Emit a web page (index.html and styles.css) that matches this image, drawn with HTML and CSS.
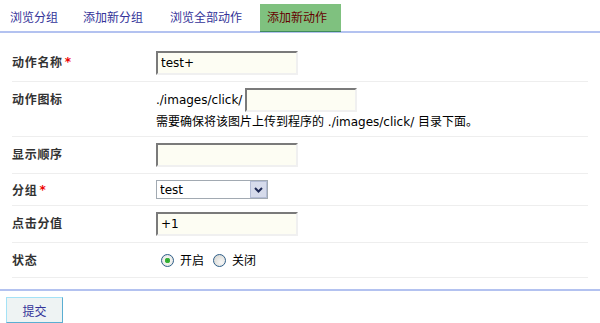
FILE: index.html
```html
<!DOCTYPE html>
<html lang="zh-CN">
<head>
    <meta charset="UTF-8">
    <title>添加新动作</title>
    <link rel="stylesheet" href="styles.css">
</head>
<body>
    <div class="tabs">
        <a class="tab" href="#">浏览分组</a>
        <a class="tab" href="#">添加新分组</a>
        <a class="tab" href="#">浏览全部动作</a>
        <a class="tab active" href="#">添加新动作</a>
    </div>

    <form class="action-form">
        <table class="form-table">
            <tr>
                <th><div class="cell-label">动作名称<span class="req">*</span></div></th>
                <td><input type="text" class="text-input" value="test+"></td>
            </tr>
            <tr>
                <th><div class="cell-label">动作图标</div></th>
                <td>
                    <div class="icon-line">
                        <span class="prefix">./images/click/</span><input type="text" class="text-input short">
                    </div>
                    <div class="hint">需要确保将该图片上传到程序的 ./images/click/ 目录下面。</div>
                </td>
            </tr>
            <tr>
                <th><div class="cell-label">显示顺序</div></th>
                <td><input type="text" class="text-input"></td>
            </tr>
            <tr>
                <th><div class="cell-label short-label">分组<span class="req">*</span></div></th>
                <td>
                    <div class="select-wrap">
                        <select class="group-select">
                            <option>test</option>
                        </select>
                        <span class="select-arrow">
                            <svg width="9" height="6" viewBox="0 0 9 6"><path d="M1 1 L4.5 4.5 L8 1" fill="none" stroke="#1f2a55" stroke-width="2"/></svg>
                        </span>
                    </div>
                </td>
            </tr>
            <tr>
                <th><div class="cell-label">点击分值</div></th>
                <td><input type="text" class="text-input" value="+1"></td>
            </tr>
            <tr>
                <th><div class="cell-label">状态</div></th>
                <td>
                    <div class="radio-group">
                        <label class="radio"><input type="radio" name="status" checked>开启</label>
                        <label class="radio"><input type="radio" name="status">关闭</label>
                    </div>
                </td>
            </tr>
        </table>

        <div class="form-footer">
            <button type="button" class="submit-btn">提交</button>
        </div>
    </form>
</body>
</html>
```

FILE: styles.css
```css
body {
    margin: 0;
    font-family: "DejaVu Sans", "Noto Sans CJK SC", sans-serif;
    font-size: 12px;
    color: #000;
    background: #fff;
}
.tabs {
    display: flex;
    height: 27px;
    padding: 4px 0 0 3px;
    border-bottom: 2px solid #b3c2f0;
}
.tab {
    display: block;
    height: 27px;
    line-height: 26px;
    padding: 0 14px 0 7px;
    margin-right: 4px;
    font-family: "Noto Sans CJK SC", sans-serif;
    color: #333399;
    text-decoration: none;
}
.tab:nth-child(2) {
    margin-right: 6px;
}
.tab.active {
    background: #7fc17f;
    border-bottom: 1px solid #3f8a5c;
    color: #660000;
}
.action-form {
    margin: 0;
}
.form-table {
    margin: 12px 12px 0 12px;
    width: 576px;
    border-collapse: collapse;
}
.form-table th,
.form-table td {
    padding: 6px 0;
    border-bottom: 1px solid #eeeeee;
    vertical-align: top;
    line-height: 16px;
}
.form-table th {
    width: 144px;
    text-align: left;
}
.cell-label {
    display: flex;
    align-items: center;
    height: 22px;
    font-family: "Noto Sans CJK SC", sans-serif;
    font-weight: bold;
    letter-spacing: 0.7px;
    color: #333;
}
.cell-label.short-label {
    height: 19px;
}
.req {
    color: #e00;
    font-family: "DejaVu Sans", sans-serif;
    margin-left: 2px;
}
.text-input {
    box-sizing: border-box;
    display: block;
    width: 142px;
    height: 24px;
    margin: 0;
    padding: 0 3px;
    font-family: "DejaVu Sans", sans-serif;
    font-size: 12px;
    color: #000;
    background: #fdfdf3;
    border: 2px solid;
    border-color: #7a7a7a #f0f0f0 #f0f0f0 #7a7a7a;
    outline: none;
}
.icon-line {
    display: flex;
    align-items: center;
    height: 24px;
}
.prefix {
    font-size: 12px;
    width: 89px;
}
.text-input.short {
    width: 112px;
}
.hint {
    height: 16px;
    margin-top: 2px;
    font-size: 12px;
    white-space: nowrap;
}
.select-wrap {
    position: relative;
    width: 112px;
    height: 19px;
}
.group-select {
    -webkit-appearance: none;
    appearance: none;
    box-sizing: border-box;
    display: block;
    width: 112px;
    height: 19px;
    margin: 0;
    padding: 0 0 0 3px;
    font-family: "DejaVu Sans", sans-serif;
    font-size: 12px;
    color: #000;
    background: #fff;
    border: 1px solid #a2aab2;
    border-radius: 0;
}
.select-arrow {
    position: absolute;
    top: 1px;
    right: 1px;
    width: 15px;
    height: 15px;
    display: flex;
    align-items: center;
    justify-content: center;
    background: #d6dbeb;
    border: 1px solid #b4bdd6;
    pointer-events: none;
}
.radio-group {
    display: flex;
    align-items: center;
    height: 22px;
    padding-left: 5px;
}
.radio {
    display: flex;
    align-items: center;
    margin-right: 9px;
    font-family: "Noto Sans CJK SC", sans-serif;
}
.radio input {
    -webkit-appearance: none;
    appearance: none;
    box-sizing: border-box;
    width: 13px;
    height: 13px;
    margin: 0 6px 0 0;
    border: 1px solid #2f5f8a;
    border-radius: 50%;
    background: radial-gradient(circle at 65% 65%, #f8f8f8 0%, #dcdcd8 70%, #c8c8c4 100%);
}
.radio input:checked {
    background: radial-gradient(circle, #2aa52a 0, #42b842 2.5px, #f3f3f1 3px, #dcdcd8 100%);
}
.form-footer {
    margin-top: 11px;
    border-top: 2px solid #b3c2f0;
    padding: 6px;
}
.submit-btn {
    box-sizing: border-box;
    display: block;
    width: 57px;
    height: 26px;
    padding: 0;
    font-family: "Noto Sans CJK SC", sans-serif;
    font-size: 12px;
    color: #333399;
    background: #eef3f3;
    border: 1px solid;
    border-color: #a4e2f6 #5aaed2 #5aaed2 #a4e2f6;
    cursor: pointer;
}
```
